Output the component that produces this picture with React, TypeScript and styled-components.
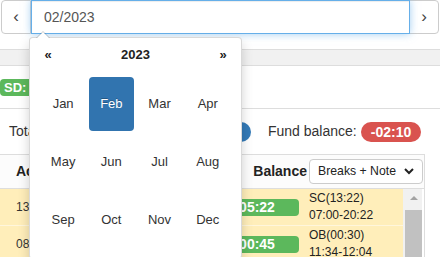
import React from "react";
import styled, { createGlobalStyle } from "styled-components";

const GlobalStyle = createGlobalStyle`
  html, body { margin: 0; padding: 0; background: #fff; }
  body {
    font-family: "Liberation Sans", Arial, sans-serif;
    font-size: 14px;
    line-height: 1.42857;
    color: #333;
    overflow: hidden;
  }
  * { box-sizing: border-box; }
`;

const Page = styled.div`
  position: relative;
  width: 440px;
  height: 257px;
  overflow: hidden;
`;

const InputGroup = styled.div`
  display: flex;
  height: 34px;
  padding: 0 1px;
`;

const NavButton = styled.button<{ $side: "left" | "right" }>`
  width: 30px;
  height: 34px;
  padding: 0 0 2px;
  border: 1px solid #ccc;
  background: #fff;
  color: #444;
  font-family: "Liberation Sans", Arial, sans-serif;
  font-size: 17px;
  line-height: 1;
  border-radius: ${(p) => (p.$side === "left" ? "4px 0 0 4px" : "0 4px 4px 0")};
  margin-left: ${(p) => (p.$side === "right" ? "-1px" : "0")};
`;

const DateInput = styled.input`
  flex: 1;
  min-width: 0;
  height: 34px;
  padding: 6px 12px;
  border: 1px solid #66afe9;
  outline: none;
  position: relative;
  z-index: 2;
  font-family: "Liberation Sans", Arial, sans-serif;
  font-size: 14px;
  color: #555;
  background: #fff;
  box-shadow: inset 0 1px 1px rgba(0, 0, 0, 0.075), 0 0 8px rgba(102, 175, 233, 0.6);
`;

const GrayBar = styled.div`
  margin-top: 15px;
  height: 17px;
  background: #f1f1f1;
  border-top: 1px solid #ddd;
  border-bottom: 1px solid #ddd;
`;

const BadgeSection = styled.div`
  height: 42px;
  display: flex;
  align-items: center;
`;

const TagBadge = styled.span`
  display: inline-block;
  height: 17px;
  line-height: 17px;
  padding: 0 4px;
  border-radius: 4px;
  background: #5cb85c;
  color: #fff;
  font-weight: bold;
  font-size: 13px;
`;

const SummaryRow = styled.div`
  height: 46px;
  border-top: 1px solid #ddd;
  display: flex;
  align-items: center;
  padding-left: 9px;
`;

const StatGroup = styled.div`
  width: 242px;
  display: flex;
  align-items: center;
  justify-content: space-between;
`;

const FundLabel = styled.span`
  margin-left: 17px;
  margin-right: 4px;
`;

const Pill = styled.span<{ $tone: "blue" | "red" }>`
  display: inline-block;
  height: 20px;
  line-height: 20px;
  padding: 0 10px;
  border-radius: 10px;
  color: #fff;
  font-weight: bold;
  font-size: 14px;
  background: ${(p) => (p.$tone === "red" ? "#d9534f" : "#337ab7")};
`;

const TableBox = styled.div`
  width: 425px;
  border-top: 1px solid #ddd;
  border-right: 1px solid #ddd;
`;

const TableHead = styled.div`
  height: 34px;
  display: flex;
  align-items: center;
  padding: 0 1px 0 16px;
  border-bottom: 1px solid #ddd;
  background: #fcfcfc;
`;

const HeadLabel = styled.span`
  font-weight: bold;
  color: #222;
`;

const Spacer = styled.div`
  flex: 1;
`;

const SelectBox = styled.div`
  width: 114px;
  height: 25px;
  margin-left: 2px;
  border: 1px solid #ccc;
  border-radius: 4px;
  background: #fff;
  display: flex;
  align-items: center;
  justify-content: space-between;
  padding: 0 8px 0 8px;
  font-size: 12.25px;
  color: #222;
`;

const BodyArea = styled.div`
  display: flex;
  height: 240px;
  padding-right: 2px;
`;

const RowList = styled.div`
  flex: 1;
  min-width: 0;
`;

const ScrollTrack = styled.div`
  width: 19px;
  background: #f1f1f1;
  display: flex;
  flex-direction: column;
  align-items: flex-end;
`;

const ScrollUp = styled.div`
  width: 17px;
  height: 17px;
  display: flex;
  align-items: center;
  justify-content: center;
  &::before {
    content: "";
    border-left: 4px solid transparent;
    border-right: 4px solid transparent;
    border-bottom: 4px solid #a3a3a3;
  }
`;

const ScrollThumb = styled.div`
  width: 17px;
  height: 150px;
  margin-top: 4px;
  background: #c1c1c1;
`;

const Row = styled.div`
  display: grid;
  grid-template-columns: 210px 94px 1fr;
  align-items: center;
  height: 37px;
  background: #ffeeba;
  border-bottom: 1px solid #fff6dc;
  font-size: 12px;
  line-height: 17px;
`;

const TimeCell = styled.div`
  padding-left: 16px;
`;

const BadgeCell = styled.div`
  padding: 0 5px;
`;

const TimeBadge = styled.div`
  height: 17px;
  line-height: 17px;
  border-radius: 4px;
  background: #5cb85c;
  color: #fff;
  font-weight: bold;
  font-size: 14px;
  text-align: center;
`;

const NoteCell = styled.div`
  padding-left: 5px;
  color: #222;
`;

const Picker = styled.div`
  position: absolute;
  left: 29px;
  top: 37px;
  width: 213px;
  z-index: 10;
  background: #fff;
  border: 1px solid rgba(0, 0, 0, 0.15);
  border-radius: 4px;
  box-shadow: 0 6px 12px rgba(0, 0, 0, 0.175);
  padding: 4px;
  font-size: 13px;
  &::before {
    content: "";
    position: absolute;
    top: -7px;
    left: 6px;
    border-left: 7px solid transparent;
    border-right: 7px solid transparent;
    border-bottom: 7px solid rgba(0, 0, 0, 0.2);
  }
  &::after {
    content: "";
    position: absolute;
    top: -6px;
    left: 7px;
    border-left: 6px solid transparent;
    border-right: 6px solid transparent;
    border-bottom: 6px solid #fff;
  }
`;

const PickerHead = styled.div`
  display: flex;
  align-items: center;
  height: 26px;
  margin-bottom: 2px;
  font-weight: bold;
  color: #222;
`;

const HeadArrow = styled.span`
  width: 28px;
  text-align: center;
`;

const HeadTitle = styled.span`
  flex: 1;
  text-align: center;
`;

const MonthGrid = styled.div`
  display: flex;
  flex-wrap: wrap;
  padding: 5px;
`;

const Month = styled.span<{ $active?: boolean }>`
  width: 23%;
  height: 54px;
  line-height: 54px;
  margin: 1%;
  text-align: center;
  border-radius: 4px;
  color: ${(p) => (p.$active ? "#fff" : "#333")};
  background: ${(p) => (p.$active ? "#3174af" : "transparent")};
  text-shadow: ${(p) => (p.$active ? "0 -1px 0 rgba(0,0,0,.25)" : "none")};
`;

const months = ["Jan", "Feb", "Mar", "Apr", "May", "Jun", "Jul", "Aug", "Sep", "Oct", "Nov", "Dec"];

const rows = [
  { start: "13:22", bal: "05:22", note: "SC(13:22)", span: "07:00-20:22" },
  { start: "08:45", bal: "00:45", note: "OB(00:30)", span: "11:34-12:04" },
  { start: "08:10", bal: "00:10", note: "OB(00:30)", span: "12:00-12:30" },
  { start: "08:00", bal: "00:00", note: "OB(00:30)", span: "12:15-12:45" },
];

const Chevron = () => (
  <svg width="10" height="7" viewBox="0 0 10 7">
    <polyline points="1,1 5,5 9,1" fill="none" stroke="#222" strokeWidth="2" />
  </svg>
);

export default function App() {
  return (
    <Page>
      <GlobalStyle />
      <InputGroup>
        <NavButton $side="left">‹</NavButton>
        <DateInput readOnly value="02/2023" />
        <NavButton $side="right">›</NavButton>
      </InputGroup>
      <GrayBar />
      <BadgeSection>
        <TagBadge>SD: 160:00</TagBadge>
      </BadgeSection>
      <SummaryRow>
        <StatGroup>
          <span>Total balance:</span>
          <Pill $tone="blue">+12:40</Pill>
        </StatGroup>
        <FundLabel>Fund balance:</FundLabel>
        <Pill $tone="red">-02:10</Pill>
      </SummaryRow>
      <TableBox>
        <TableHead>
          <HeadLabel>Actual</HeadLabel>
          <Spacer />
          <HeadLabel>Balance</HeadLabel>
          <SelectBox>
            <span>Breaks + Note</span>
            <Chevron />
          </SelectBox>
        </TableHead>
        <BodyArea>
          <RowList>
            {rows.map((r, i) => (
              <Row key={i}>
                <TimeCell>{r.start}</TimeCell>
                <BadgeCell>
                  <TimeBadge>{r.bal}</TimeBadge>
                </BadgeCell>
                <NoteCell>
                  {r.note}
                  <br />
                  {r.span}
                </NoteCell>
              </Row>
            ))}
          </RowList>
          <ScrollTrack>
            <ScrollUp />
            <ScrollThumb />
          </ScrollTrack>
        </BodyArea>
      </TableBox>
      <Picker>
        <PickerHead>
          <HeadArrow>«</HeadArrow>
          <HeadTitle>2023</HeadTitle>
          <HeadArrow>»</HeadArrow>
        </PickerHead>
        <MonthGrid>
          {months.map((m) => (
            <Month key={m} $active={m === "Feb"}>
              {m}
            </Month>
          ))}
        </MonthGrid>
      </Picker>
    </Page>
  );
}
